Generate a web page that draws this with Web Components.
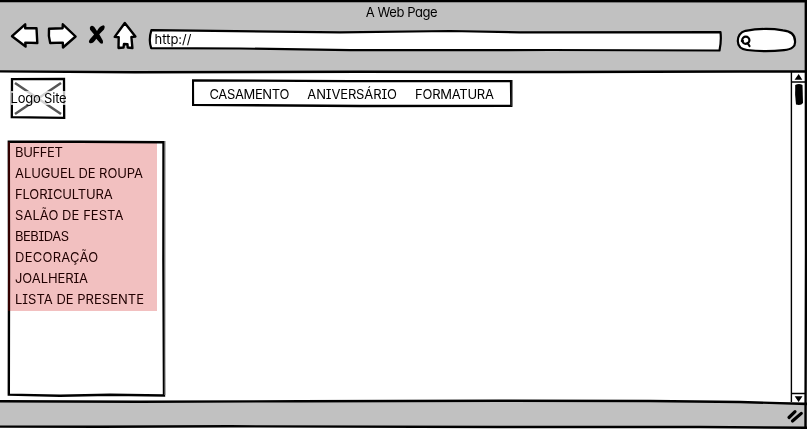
<!DOCTYPE html>
<html lang="pt"><head><meta charset="utf-8"><title>A Web Page</title>
<style>body{margin:0;background:#fff;overflow:hidden}</style></head><body>
<wire-browser>
  <wire-toolbar slot="toolbar"></wire-toolbar>
  <wire-sidebar slot="side"></wire-sidebar>
  <wire-nav slot="nav"></wire-nav>
  <wire-scroll slot="scroll"></wire-scroll>
  <wire-status slot="status"></wire-status>
</wire-browser>
<script>
function define(name, html){
  const t=document.createElement('template');t.innerHTML=html;
  customElements.define(name,class extends HTMLElement{
    constructor(){super();this.attachShadow({mode:'open'}).append(t.content.cloneNode(true));}
  });
}
/* Text label whose tracking is set so that it spans the given width. */
class WireLabel extends HTMLElement{
  constructor(){super();this.attachShadow({mode:'open'}).innerHTML=`<style>
    :host{display:block;font:13px/21px Inter,"Noto Sans",sans-serif;font-feature-settings:"cv08","cv11","ss01" 0;white-space:nowrap;color:inherit}
    span{display:inline-block}</style><span></span>`;}
  connectedCallback(){
    const s=this.shadowRoot.querySelector('span'),w=+this.getAttribute('span');
    s.textContent=this.getAttribute('text');this.style.width=w+'px';
    s.style.letterSpacing=(w+1-s.getBoundingClientRect().width)/(s.textContent.length)+'px';
  }
}
customElements.define('wire-label',WireLabel);

define('wire-browser',`<style>
:host{display:grid;grid-template-rows:72px 330px 28px;width:807px;height:430px;position:relative;font-family:Inter,sans-serif;color:#000}
main{display:grid;grid-template-columns:192px 1fr 17px;min-height:0}
svg{position:absolute;inset:0;pointer-events:none}
</style>
<slot name="toolbar"></slot>
<main><slot name="side"></slot><slot name="nav"></slot><slot name="scroll"></slot></main>
<slot name="status"></slot>
<svg width="807" height="430" fill="none" stroke="#000" stroke-width="2.4">
<path d="M0 1L807 1.2M805.8 0L806 250L805.5 428M0 71.4L135 72.3L360 71.8L560 72L740 71.5L807 71.3"/>
<path d="M0 401.2L140 401.8L300 401.2L500 400.7L650 401L740 402L807 404M0 426.6L100 426.8L230 426.3L500 427L700 427L807 427.8"/>
</svg>`);

define('wire-toolbar',`<style>
:host{display:grid;grid-template-rows:24px 1fr;background:#c1c1c1}
.title{display:flex;justify-content:center;padding:2px 5px 0 0}
.bar{display:flex;align-items:flex-start}
.icons{flex:0 0 149px;height:48px;stroke-width:2.4}
.url{position:relative;width:573px;height:28px}
.url wire-label{position:relative;padding:5px 0 0 5.5px}
.url svg{position:absolute;inset:0}
.search{margin-left:13px}
svg{display:block;overflow:visible;fill:#fff;stroke:#000;stroke-linejoin:round;stroke-linecap:round;stroke-width:2.2}
</style>
<div class="title"><wire-label text="A Web Page" span="70.5"></wire-label></div>
<div class="bar">
<svg class="icons" width="149" height="48" viewBox="0 24 149 48">
<path d="M12 36.2L25.2 24.3L25.2 28.2L36.5 28.2L37.3 43L25.3 42.6L25.6 46.5Z"/>
<path d="M49 28.8L62.6 28.2L62.8 24.3L75.6 36.5L63 47.5L62.8 42.6L50.2 43Q48.2 36 49 28.8Z"/>
<path fill="#000" stroke="none" d="M89.8 27.7Q91.2 24.2 94.3 27.1L97 31Q99.6 26.1 103.3 25.3Q105.7 25.7 104 29.5L99.3 34.3L102.8 40.5Q103.8 45 100.3 43.3L96.3 38.8Q92.8 44.2 90 43.2Q87.7 42 90.1 38.9L94.1 34.5L90.1 29.8Z"/>
<path d="M124.8 23L135.4 36.6L131.4 37L132.4 48L127.7 47.5L127.5 44.2L124 44L123.5 47.5L118.5 48L118.7 37.3L114.7 36.9Z"/>
</svg>
<div class="url"><svg width="573" height="28" viewBox="149 24 573 28"><path d="M151.4 30.2L340 32.3L450 31L520 32.3L720.5 32.2Q721.5 41 719.5 50.5L550 50L350 50.2L240 48.5L151.2 48.2Q148.3 40 151.4 30.2Z"/></svg><wire-label text="http://" span="36"></wire-label></div>
<svg class="search" width="66" height="30" viewBox="735 24 66 30"><path d="M745.5 30.8Q765 27.3 783 30.3Q795 31.5 795 41Q796 49 784 50.1Q765 52.3 747 50Q738 49 737.8 41Q738 33 745.5 30.8Z"/><circle cx="745.8" cy="40.3" r="3.6"/><path d="M747.5 43L749.5 46M741.8 41H743" stroke-width="2.2"/></svg>
</div>`);

define('wire-logo',`<style>
:host{display:flex;flex-direction:column;justify-content:center;position:relative;width:56px;height:42px}
svg{position:absolute;inset:0}
wire-label{position:relative;line-height:14px;background:#fffb;margin-left:.5px}
</style><svg width="56" height="42" viewBox="10 77 56 42" fill="none"><path d="M15 83L61 114M61 83L15 114" stroke="#555" stroke-width="2.5"/><path d="M12 79.2L64 79L64.2 117.8L11.8 117.2Z" stroke="#000" stroke-width="2.3"/></svg>
<wire-label text="Logo Site" span="55"></wire-label>`);

define('wire-sidebar',`<style>
:host{display:flex;flex-direction:column;padding:5px 0 0 10px}
.box{position:relative;margin:20px 0 0 -3px;width:160px;height:258px}
svg{position:absolute;inset:0}
.list{position:absolute;left:2px;top:3px;width:148px;height:168.5px;mix-blend-mode:multiply;background:#f2c0c0}
.list wire-label{margin-left:6px;color:#200000}
.edge{position:absolute;left:1px;top:3px;width:2px;height:169px;background:#300}
</style>
<wire-logo></wire-logo>
<div class="box"><svg width="160" height="258" viewBox="7 139 160 258" fill="none" stroke="#000">
<path stroke-width="2.4" d="M8.8 141.6L80 141.8L163.5 142.3L163.4 260L164 395.5L110 394.7L60 395.8L8.8 394.6L9 270Z"/><path d="M165 141L164.9 395" stroke="#777" stroke-width="1"/></svg>
<div class="list">
<wire-label text="BUFFET" span="46.5"></wire-label><wire-label text="ALUGUEL DE ROUPA" span="127"></wire-label><wire-label text="FLORICULTURA" span="96.5"></wire-label><wire-label text="SALÃO DE FESTA" span="107.5"></wire-label><wire-label text="BEBIDAS" span="52.5"></wire-label><wire-label text="DECORAÇÃO" span="82.5"></wire-label><wire-label text="JOALHERIA" span="72"></wire-label><wire-label text="LISTA DE PRESENTE" span="128"></wire-label>
</div><div class="edge"></div></div>`);

define('wire-nav',`<style>
:host{display:block;padding-top:7px}
nav{position:relative;width:322px;height:29px;display:flex;gap:19.3px;padding:5px 0 0 17.5px;box-sizing:border-box}
svg{position:absolute;left:0;top:0}
wire-label{position:relative}
</style><nav><svg width="322" height="29" viewBox="192 79 322 29" fill="none" stroke="#000" stroke-width="2.3"><path d="M192.9 80.4L350 81.2L511 81.2L511.3 105.8L360 106L193 104.8Z"/><path d="M512.4 80L512.2 106" stroke="#777" stroke-width="1"/></svg>
<wire-label text="CASAMENTO" span="78.5"></wire-label><wire-label text="ANIVERSÁRIO" span="88.5"></wire-label><wire-label text="FORMATURA" span="77.5"></wire-label></nav>`);

define('wire-scroll',`<style>:host{display:block}svg{display:block}</style>
<svg width="17" height="331" viewBox="790 72 17 331"><path d="M791.4 72V403M791 82H805M791 393.5H805" stroke="#000" stroke-width="1.4" fill="none"/><path d="M798.7 74L802.3 79.8H794.6ZM794.7 396.3H802.5L798.6 402Z"/><path d="M795.2 85Q799 83.2 802.5 85L803 103Q801 105.8 796 104.5Q794.7 95 795.2 85Z"/></svg>`);

define('wire-status',`<style>:host{display:flex;justify-content:flex-end;height:25px;background:#c1c1c1}svg{margin-right:3px}</style>
<svg width="18" height="25" viewBox="786 402 18 25" stroke="#000" stroke-width="3.2" stroke-linecap="round"><path d="M789 417.5L795 411.7M792.5 421L801.3 413.4"/></svg>`);
</script></body></html>
